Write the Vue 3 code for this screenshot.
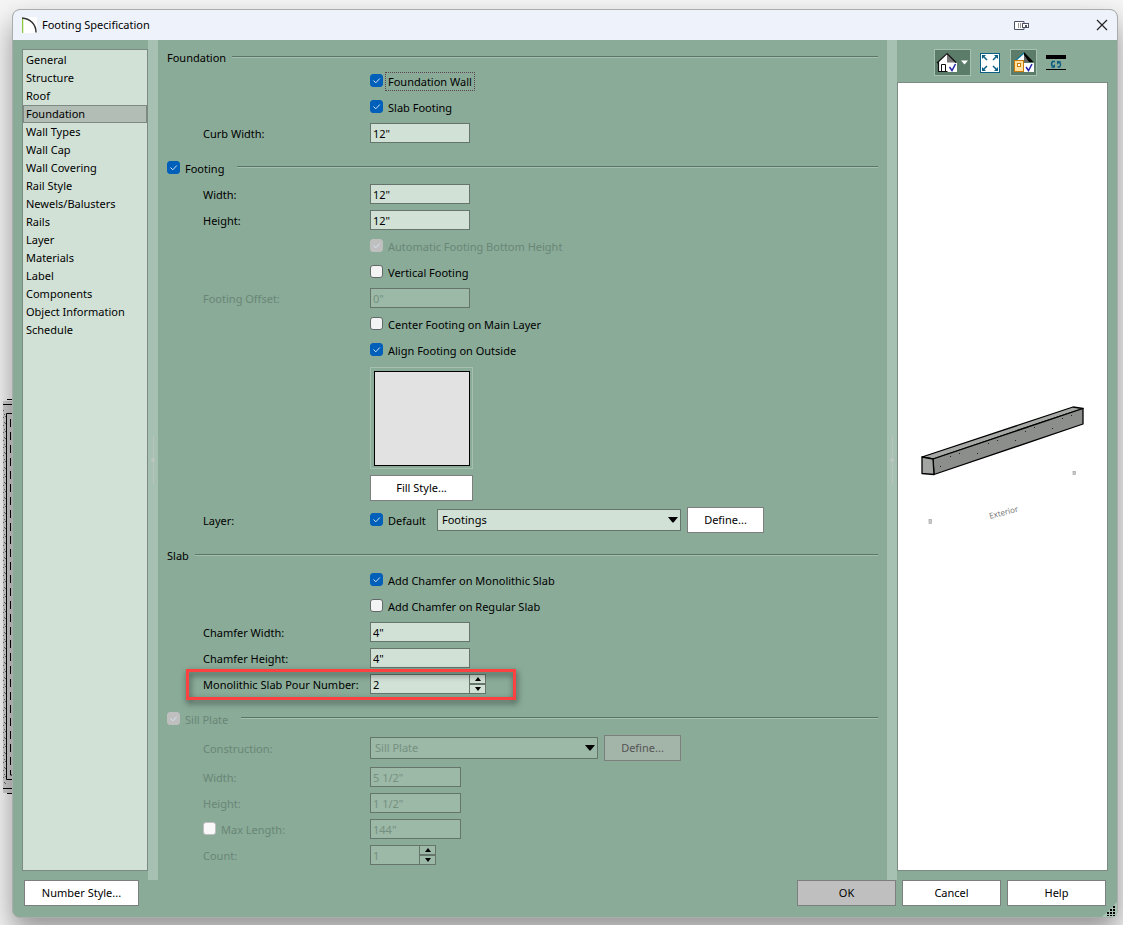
<script setup>
import { ref, reactive } from 'vue'

const pages = [
  'General', 'Structure', 'Roof', 'Foundation', 'Wall Types', 'Wall Cap',
  'Wall Covering', 'Rail Style', 'Newels/Balusters', 'Rails', 'Layer',
  'Materials', 'Label', 'Components', 'Object Information', 'Schedule',
]
const activePage = ref('Foundation')

const form = reactive({
  foundationWall: true,
  slabFooting: true,
  curbWidth: '12"',
  footing: true,
  footingWidth: '12"',
  footingHeight: '12"',
  vertical: false,
  offset: '0"',
  centerMain: false,
  alignOutside: true,
  layerDefault: true,
  chamferMono: true,
  chamferRegular: false,
  chamferWidth: '4"',
  chamferHeight: '4"',
  pour: 2,
})

const hatch = Array.from({ length: 150 }, (_, i) => ({
  x: 3 + ((i * 7) % 3),
  y: 12 + Math.floor(i * 2.5) + ((i * 5) % 3),
}))
</script>

<template>
  <div class="desktop">
    <svg class="plan" width="13" height="398" viewBox="0 0 13 398" aria-hidden="true">
      <rect x="3" y="3" width="10" height="392" fill="#d0d0d0" />
      <rect v-for="(p, i) in hatch" :key="i" :x="p.x" :y="p.y" width="1" height="1" fill="#666" />
      <path d="M7 1.500H13M3 6.500H13M13 15.500H6.500V381.500H13M3 390.500H13M7 395.500H13" fill="none" stroke="#000" />
      <path d="M10.500 21V377H13" fill="none" stroke="#000" stroke-dasharray="8 5" />
    </svg>

    <div class="window" role="dialog" aria-labelledby="dialog-title">
      <header class="titlebar">
        <svg width="15" height="16" viewBox="0 0 15 16" aria-hidden="true">
          <rect width="15" height="16" fill="#fff" />
          <path d="M.5 1V16" stroke="#8dc63f" stroke-width="1.500" />
          <path d="M0 1C8 1.500 14 7 14 15.500" fill="none" stroke="#333" stroke-width="1.500" />
        </svg>
        <h1 id="dialog-title">Footing Specification</h1>
        <button class="plain dock" aria-label="Dock">
          <svg width="16" height="11" viewBox="0 0 16 11">
            <path d="M10 3V1.500H.5V9.500H10V8" fill="#fff" stroke="#4c5263" />
            <path d="M4.500 3V8M6.500 3V8" stroke="#999" />
            <rect x="8.500" y="3.500" width="6" height="4" fill="#fff" stroke="#4c5263" />
            <rect x="11" y="5" width="2" height="2" fill="#4c5263" />
          </svg>
        </button>
        <button class="plain" aria-label="Close">
          <svg width="12" height="12" viewBox="0 0 12 12"><path d="M1 1L11 11M11 1L1 11" stroke="#222" stroke-width="1.200" /></svg>
        </button>
      </header>

      <div class="content">
        <nav class="pages" aria-label="Pages">
          <button
            v-for="p in pages" :key="p" class="page" :class="{ active: p === activePage }"
            @click="activePage = p"
          >{{ p }}</button>
        </nav>

        <div class="splitter"><i></i></div>

        <main class="panel">
          <section>
            <h2 class="head">Foundation</h2>
            <div class="row"><label class="check control focused"><input v-model="form.foundationWall" type="checkbox"><span>Foundation Wall</span></label></div>
            <div class="row"><label class="check control"><input v-model="form.slabFooting" type="checkbox"><span>Slab Footing</span></label></div>
            <div class="row"><label class="name" for="curb">Curb Width:</label><input id="curb" v-model="form.curbWidth" class="field" type="text"></div>
          </section>

          <section class="footing">
            <h2 class="head group"><label class="check"><input v-model="form.footing" type="checkbox"><span>Footing</span></label></h2>
            <div class="row"><label class="name" for="fw">Width:</label><input id="fw" v-model="form.footingWidth" class="field" type="text"></div>
            <div class="row"><label class="name" for="fh">Height:</label><input id="fh" v-model="form.footingHeight" class="field" type="text"></div>
            <div class="row"><label class="check control off"><input type="checkbox" checked disabled><span>Automatic Footing Bottom Height</span></label></div>
            <div class="row"><label class="check control"><input v-model="form.vertical" type="checkbox"><span>Vertical Footing</span></label></div>
            <div class="row off"><label class="name" for="fo">Footing Offset:</label><input id="fo" v-model="form.offset" class="field" type="text" disabled></div>
            <div class="row"><label class="check control"><input v-model="form.centerMain" type="checkbox"><span>Center Footing on Main Layer</span></label></div>
            <div class="row"><label class="check control"><input v-model="form.alignOutside" type="checkbox"><span>Align Footing on Outside</span></label></div>
            <div class="fill control">
              <div class="swatch"></div>
              <button class="btn">Fill Style...</button>
            </div>
            <div class="row">
              <span class="name">Layer:</span>
              <label class="check default"><input v-model="form.layerDefault" type="checkbox"><span>Default</span></label>
              <div class="combo layer">
                <select aria-label="Layer"><option>Footings</option></select>
                <svg width="10" height="6" viewBox="0 0 10 6"><path d="M0 0H10L5.500 5.500H4.500Z" /></svg>
              </div>
              <button class="btn define">Define...</button>
            </div>
          </section>

          <section class="slab">
            <h2 class="head">Slab</h2>
            <div class="row"><label class="check control"><input v-model="form.chamferMono" type="checkbox"><span>Add Chamfer on Monolithic Slab</span></label></div>
            <div class="row"><label class="check control"><input v-model="form.chamferRegular" type="checkbox"><span>Add Chamfer on Regular Slab</span></label></div>
            <div class="row"><label class="name" for="cw">Chamfer Width:</label><input id="cw" v-model="form.chamferWidth" class="field" type="text"></div>
            <div class="row"><label class="name" for="ch">Chamfer Height:</label><input id="ch" v-model="form.chamferHeight" class="field" type="text"></div>
            <div class="row marked">
              <label class="name" for="pour">Monolithic Slab Pour Number:</label>
              <input id="pour" v-model="form.pour" class="field" type="text">
              <span class="spin">
                <button aria-label="Increase pour number" @click="form.pour++"><svg width="6" height="4" viewBox="0 0 6 4"><path d="M0 4L3 0L6 4Z" /></svg></button>
                <button aria-label="Decrease pour number" @click="form.pour--"><svg width="6" height="4" viewBox="0 0 6 4"><path d="M0 0L3 4L6 0Z" /></svg></button>
              </span>
            </div>
          </section>

          <section class="sill off">
            <h2 class="head group"><label class="check"><input type="checkbox" checked disabled><span>Sill Plate</span></label></h2>
            <div class="row construction">
              <label class="name" for="sc">Construction:</label>
              <div class="combo">
                <select id="sc" disabled><option>Sill Plate</option></select>
                <svg width="10" height="6" viewBox="0 0 10 6"><path d="M0 0H10L5.500 5.500H4.500Z" /></svg>
              </div>
              <button class="btn define" disabled>Define...</button>
            </div>
            <div class="row"><label class="name" for="sw">Width:</label><input id="sw" class="field short" type="text" value="5 1/2&quot;" disabled></div>
            <div class="row"><label class="name" for="sh">Height:</label><input id="sh" class="field short" type="text" value="1 1/2&quot;" disabled></div>
            <div class="row"><label class="check name"><input type="checkbox" disabled><span>Max Length:</span></label><input aria-label="Max Length" class="field short" type="text" value="144&quot;" disabled></div>
            <div class="row">
              <label class="name" for="count">Count:</label>
              <input id="count" class="field tiny" type="text" value="1" disabled>
              <span class="spin">
                <button aria-label="Increase count" disabled><svg width="6" height="4" viewBox="0 0 6 4"><path d="M0 4L3 0L6 4Z" /></svg></button>
                <button aria-label="Decrease count" disabled><svg width="6" height="4" viewBox="0 0 6 4"><path d="M0 0L3 4L6 0Z" /></svg></button>
              </span>
            </div>
          </section>
        </main>

        <div class="splitter"><i></i></div>

        <aside class="side">
          <div class="tools">
            <button class="tool on" aria-label="View options">
              <svg width="33" height="21" viewBox="0 0 33 21">
                <path d="M3 10H19V20H3Z" fill="#fff" />
                <path d="M11 1L1.500 10.500H11Z" fill="#fff" />
                <path d="M11 1L20 10.500H11Z" fill="#777" />
                <path d="M1 11L11 1.500L20 10.500M2.500 10V19.500H11.500" fill="none" stroke="#111" stroke-width="1.200" />
                <path d="M5.500 19V12.500H9.500V19" fill="#fff" stroke="#111" />
                <rect x="12" y="11" width="9" height="9" fill="#fff" />
                <path d="M13.500 15L16 18.500L19.500 12" fill="none" stroke="#2424a8" stroke-width="1.500" />
                <path d="M25 8.500H32L28.500 12.500Z" fill="#fff" />
              </svg>
            </button>
            <button class="tool fit" aria-label="Fill window">
              <svg width="20" height="20" viewBox="0 0 20 20">
                <rect x=".5" y=".5" width="19" height="19" fill="#fff" stroke="#0c5f83" />
                <path d="M2 2H6L2 6ZM18 2V6L14 2ZM2 18V14L6 18ZM18 18H14L18 14Z" fill="#0c5f83" />
                <path d="M3 3L7 7M17 3L13 7M3 17L7 13M17 17L13 13" stroke="#0c5f83" stroke-width="1.500" />
              </svg>
            </button>
            <button class="tool on" aria-label="Color">
              <svg width="23" height="21" viewBox="0 0 23 21">
                <path d="M12 1L3 9H12Z" fill="#fff" /><path d="M12 1L3 9" stroke="#0c7696" stroke-width="1.300" />
                <path d="M12 0L21.500 10H12Z" fill="#000" /><path d="M12 3V10H17Z" fill="#666" />
                <rect x="2.500" y="8.500" width="9" height="11" fill="#ffe0a0" stroke="#c77a05" />
                <rect x="5.500" y="11.500" width="3" height="3" fill="#fff" stroke="#c77a05" />
                <rect x="12" y="11" width="10" height="9" fill="#fff" />
                <path d="M14 15L16.500 18.500L20 12" fill="none" stroke="#2424a8" stroke-width="1.500" />
              </svg>
            </button>
            <button class="tool turn" aria-label="Rotate view">
              <svg width="20" height="16" viewBox="0 0 20 16">
                <rect width="20" height="4" /><rect y="14" width="20" height="1" />
                <path d="M9 6.500H6.500Q4.500 9 6.500 11.500M11.500 12H13.500Q15.500 9.500 13.500 7" fill="none" stroke="#0c5f83" stroke-width="1.500" />
                <path d="M5 12.700H9V9ZM15 6H11V9.700Z" fill="#0c5f83" />
              </svg>
            </button>
          </div>
          <div class="preview">
            <svg width="209" height="170" viewBox="898 380 209 170" role="img" aria-label="Footing preview">
              <g stroke="#000" stroke-width="1.300" stroke-linejoin="round">
                <path d="M922 457L1073 407L1083 408.500L933 459Z" fill="#a6a8a6" />
                <path d="M933 459L1083 408.500V424L934 474.500Z" fill="#8b8e8b" />
                <path d="M922 457L933 459L934 474.500L922 473.500Z" fill="#a3a5a3" />
              </g>
              <g fill="#222">
                <rect x="940" y="466" width="1" height="1" /><rect x="950" y="456" width="1" height="1" />
                <rect x="959" y="453" width="1" height="1" /><rect x="977" y="453" width="1" height="1" />
                <rect x="988" y="443" width="1" height="1" /><rect x="997" y="440" width="1" height="1" />
                <rect x="1015" y="440" width="1" height="1" /><rect x="1025" y="431" width="1" height="1" />
                <rect x="1034" y="427" width="1" height="1" /><rect x="1052" y="428" width="1" height="1" />
                <rect x="1062" y="418" width="1" height="1" /><rect x="1071" y="415" width="1" height="1" />
              </g>
              <g fill="#ccc" stroke="#999" stroke-width=".6"><rect x="929" y="519.500" width="2.500" height="4" /><rect x="1073" y="471.500" width="2.500" height="3" /></g>
              <text x="990" y="519" transform="rotate(-15 990 519)">Exterior</text>
            </svg>
          </div>
        </aside>
      </div>

      <footer class="actions">
        <button class="btn number">Number Style...</button>
        <button class="btn action primary">OK</button>
        <button class="btn action">Cancel</button>
        <button class="btn action">Help</button>
      </footer>
      <svg class="grip" width="15" height="15" viewBox="0 0 15 15" aria-hidden="true">
        <path d="M15 0V11Q15 15 11 15H0Z" fill="#a8c2b3" />
        <path d="M11 4h2v2h-2zM8 7h2v2h-2zM11 7h2v2h-2zM5 10h2v2h-2zM8 10h2v2h-2zM11 10h2v2h-2zM5 13h2v1h-2zM8 13h2v1h-2zM11 13h2v1h-2z" />
      </svg>
    </div>
  </div>
</template>

<style>
body { margin: 0; background: #f5f5f5; }
</style>

<style scoped>
.desktop {
  box-sizing: border-box;
  min-height: 100vh;
  padding: 9px 5px 7px 12px;
  display: flex;
  position: relative;
  overflow: hidden;
  font: 11px/16px "Noto Sans", "Open Sans", sans-serif;
  color: #000;
}
.desktop *, .desktop *::after { box-sizing: border-box; }
button, input, select { font: inherit; color: inherit; margin: 0; }
.plan { position: absolute; left: 0; top: 398px; }
.window {
  flex: 1;
  display: flex;
  flex-direction: column;
  position: relative;
  border: 1px solid #a9adab;
  border-radius: 8px;
  background: #8aab98;
  box-shadow: 0 14px 28px rgba(0, 0, 0, .4);
}
.titlebar {
  height: 30px;
  padding: 0 9px;
  display: flex;
  align-items: center;
  background: #eef2fa;
  border-radius: 7px 7px 0 0;
}
h1, h2 { margin: 0; font: inherit; }
h1 { flex: 1; padding-left: 5px; }
.plain { border: 0; padding: 0; background: none; display: flex; }
.dock { margin-right: 66px; }
.content { flex: 1; display: flex; }
.pages {
  width: 126px;
  margin: 9px 0 9px 9px;
  padding: 1px 0;
  border: 1px solid #7d8a84;
  background: #d1e1d6;
}
.page {
  display: block;
  width: 100%;
  height: 18px;
  padding: 0 2px;
  border: 1px solid transparent;
  background: none;
  text-align: left;
  line-height: 16px;
}
.page.active { background: #b2bdb5; border-color: #7d8a84; }
.splitter {
  width: 10px;
  background: #a6c0b1;
  display: flex;
  align-items: center;
  justify-content: center;
}
.splitter i { width: 1px; height: 48px; background: #b9c4bd; display: flex; align-items: center; justify-content: center; }
.splitter i::after { content: ""; flex: none; width: 4px; height: 4px; border-radius: 2px; background: #bcc5bf; }
.panel { flex: 1; padding: 8px 9px 0; }
.head { height: 20px; display: flex; align-items: center; gap: 6px; }
.head::after { content: ""; flex: 1; height: 2px; margin-bottom: 2px; border-top: 1px solid #5a7566; border-bottom: 1px solid #a3c0b0; }
.head.group { gap: 10px; }
.footing { padding-top: 12px; }
.footing .head { margin-bottom: 3px; }
.slab { padding-top: 13px; }
.slab .head { margin-bottom: 1px; }
.sill { padding-top: 12px; }
.sill .head { margin-bottom: 6px; }
.row { height: 26px; display: flex; align-items: center; position: relative; }
.construction { margin-bottom: 3px; }
.name { width: 203px; padding-left: 36px; }
.name:not(.check) { padding-top: 1px; }
.control { margin-left: 203px; }
.check { display: flex; align-items: center; gap: 2px; }
.check span { padding: 1px 2px 0; border: 1px dotted transparent; }
.focused span { border-color: #5b4352; }
.default { width: 60px; }
.check input {
  appearance: none;
  width: 13px;
  height: 13px;
  margin-bottom: 1px;
  border: 1px solid #62686a;
  border-radius: 3px;
  background: #f3f3f3;
}
.check input:checked {
  border-color: #005fb8;
  background: #005fb8 url("data:image/svg+xml,%3Csvg xmlns='http://www.w3.org/2000/svg' width='11' height='11'%3E%3Cpath d='M2.500 5.500L4.800 7.800L8.800 3.500' fill='none' stroke='%23d5e6f6'/%3E%3C/svg%3E");
}
.check input:disabled { border-color: #bfbfbf; background-color: #f9f9f9; }
.check input:checked:disabled { background-color: #bfbfbf; }
.off { color: #698676; }
.field {
  width: 100px;
  height: 20px;
  padding: 0 2px;
  border: 1px solid #65756c;
  border-radius: 0;
  background: #d1e1d6;
}
.field:disabled, .combo select:disabled { background: #9cb8a7; color: #75917f; opacity: 1; }
.short { width: 91px; }
.tiny { width: 50px; }
.spin { display: flex; flex-direction: column; width: 16px; height: 20px; }
.spin button {
  flex: 1;
  display: flex;
  align-items: center;
  justify-content: center;
  padding: 0;
  border: 1px solid #65756c;
  border-left: 0;
  background: #d1e1d6;
}
.off .spin button { background: #9cb8a7; }
.fill { width: 103px; padding: 4px 0 6px; display: flex; flex-direction: column; gap: 6px; }
.swatch { height: 102px; border: 1px solid #a6c0b1; padding: 3px 2px 2px 3px; }
.swatch::after { content: ""; display: block; height: 100%; border: 1px solid #000; background: #e2e2e2; }
.btn { height: 26px; padding: 0 5px; border: 1px solid #7c7f7d; border-radius: 0; background: #fff; }
.btn:disabled { background: #a3b4a9; color: #555; }
.define { width: 77px; margin-left: 6px; }
.combo { position: relative; width: 228px; height: 22px; }
.combo.layer { width: 244px; margin-left: 7px; }
.combo select {
  appearance: none;
  width: 100%;
  height: 22px;
  padding: 0 4px;
  border: 1px solid #65756c;
  border-radius: 0;
  background: #d1e1d6;
}
.combo svg { position: absolute; right: 3px; top: 8px; pointer-events: none; }
.marked::after {
  content: "";
  position: absolute;
  left: 19px;
  top: -2px;
  width: 330px;
  height: 31px;
  border: 3px solid #fb4240;
  filter: drop-shadow(1px 3px 3px rgba(0, 0, 0, .6));
  pointer-events: none;
}
.side { width: 220px; padding: 9px 9px 9px 0; display: flex; flex-direction: column; }
.tools { height: 33px; padding-left: 37px; display: flex; align-items: flex-start; gap: 9px; }
.tool { height: 27px; padding: 0; border: 0; background: none; display: flex; align-items: center; justify-content: center; }
.tool.on { border: 1px solid #a6c0b1; background: #5b7c69; padding: 0 1px; }
.tool.fit { width: 21px; justify-content: flex-start; }
.preview {
  flex: 1;
  border: 1px solid #7d8a84;
  background: #fff;
  display: flex;
  align-items: center;
  justify-content: center;
  overflow: hidden;
}
.preview svg { flex: none; margin-bottom: 24px; }
.preview text { font: 8px "Noto Sans", "Open Sans", sans-serif; fill: #777; }
.actions { height: 37px; padding: 0 11px; display: flex; align-items: flex-start; gap: 6px; }
.number { width: 115px; margin-right: auto; }
.action { width: 99px; }
.primary { background: #bfbfbf; }
.grip { position: absolute; right: 0; bottom: 0; }
</style>
